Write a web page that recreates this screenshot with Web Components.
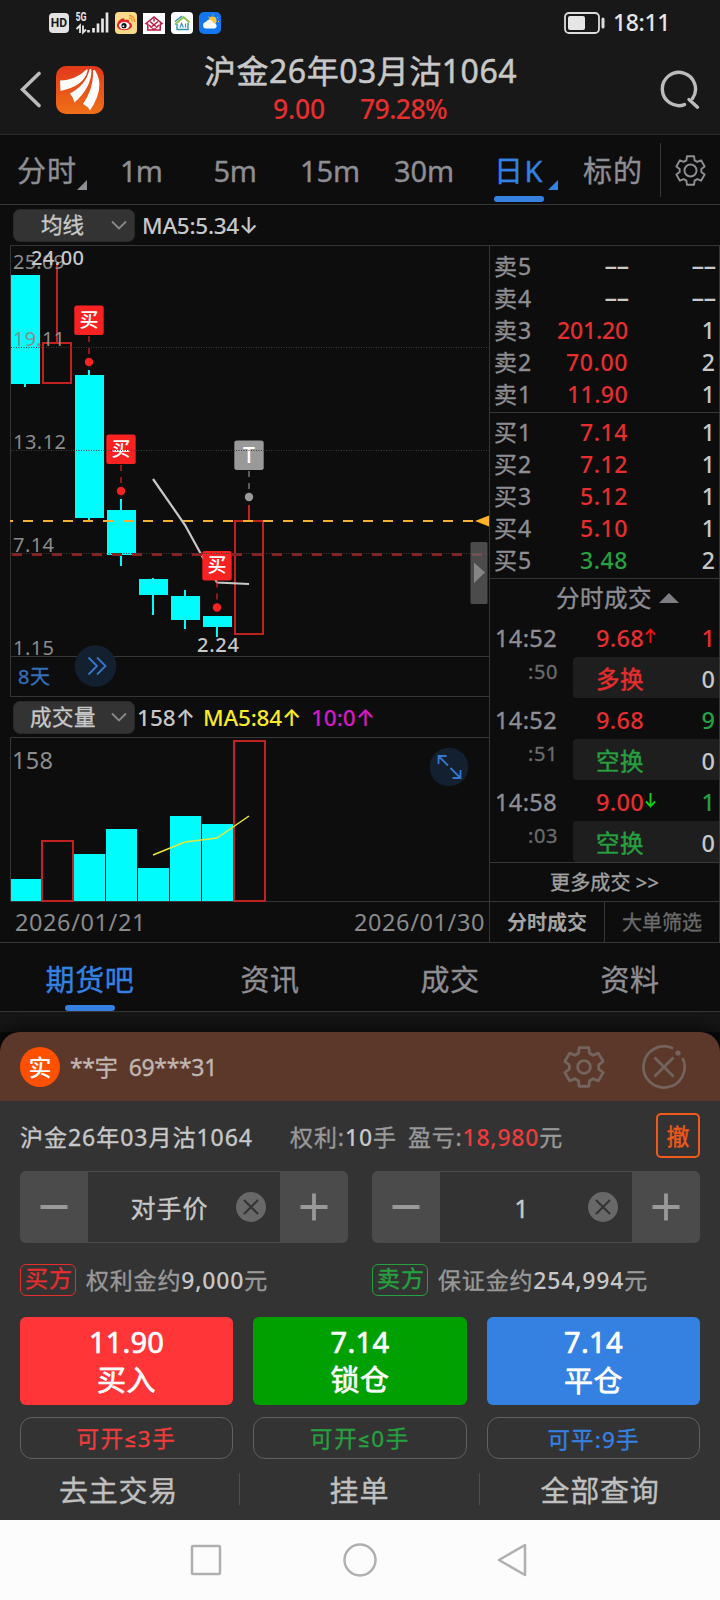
<!DOCTYPE html>
<html lang="zh-CN">
<head>
<meta charset="utf-8">
<title>沪金26年03月沽1064</title>
<style>
  body {
    margin: 0;
    background: #0d0d0d;
    color: #c8c8c8;
    font-family: "Noto Sans", "Noto Sans CJK SC", sans-serif;
    -webkit-text-stroke: 0.35px;
    --red: #e52e2e;
    --green: #27a040;
    --blue: #3581e2;
    --muted: #8e8e93;
    --line: #363636;
  }
</style>
</head>
<body>
<option-app></option-app>

<script>
/*
 * Define a custom element from a piece of markup. The markup may be a
 * function of the element, for those that read attributes.
 */
function define (name, markup) {
  customElements.define(name, class extends HTMLElement {
    constructor () {
      super()
      this.attachShadow({ mode: 'open' })
    }

    connectedCallback () {
      const template = document.createElement('template')
      template.innerHTML = typeof markup === 'function' ? markup(this) : markup
      this.shadowRoot.replaceChildren(template.content.cloneNode(true))
    }
  })
}

/*
 * Text that is tracked in or out to fill a given width.
 */
customElements.define('fit-text', class extends HTMLElement {
  constructor () {
    super()
    this.attachShadow({ mode: 'open' }).innerHTML = `
      <style>
        :host { display: block; flex: none; white-space: nowrap; line-height: 1.2; }
      </style>
      <span><slot></slot></span>`
  }

  connectedCallback () {
    const width = Number(this.getAttribute('w'))
    const natural = this.shadowRoot.querySelector('span').getBoundingClientRect().width
    const count = [...this.textContent].length
    if (width && count) {
      this.style.letterSpacing = `${(width - natural) / count}px`
    }
  }
})

define('status-bar', `
  <style>
    :host { display: flex; align-items: center; height: 45px; padding: 0 50px 0 49px; color: #e6e6e6; background: #181818; -webkit-text-stroke: 0; }
    .hd { width: 20px; height: 20px; margin-right: 7px; border-radius: 4px; background: #e2e2e2; color: #181818;
      font: 700 12px/20px Roboto, sans-serif; text-align: center; }
    .net { display: block; margin-right: 6px; }
    .apps { display: flex; gap: 6px; flex: 1; }
    svg { display: block; }
    .time { font-size: 23px; font-weight: 500; }
    .battery { margin-right: 7px; }
  </style>
  <div class="hd">HD</div>
  <svg class="net" width="33" height="24" viewBox="76 11 33 24">
    <text x="75.500" y="20.500" font-family="Roboto" font-size="12" font-weight="700" fill="#e6e6e6" textLength="11" lengthAdjust="spacingAndGlyphs">5G</text>
    <path d="M80 33V25.500L76.500 29M83 25.500V32.500L86 29.500" fill="none" stroke="#e6e6e6" stroke-width="1.800"/>
    <path d="M88.500 32.500v-2.500M93.500 32.500v-4.500M98 32.500v-9M102.500 32.500v-14M107 32.500v-20" stroke="#e6e6e6" stroke-width="2.700" stroke-linecap="butt"/>
  </svg>
  <div class="apps">
    <svg width="22" height="22" viewBox="0 0 22 22">
      <rect width="22" height="22" rx="4" fill="#fbd98a"/>
      <path d="M2 13.500C2 9.500 7 5 9 6.500c1 .7.500 2 .500 2S13 7 14 8.500c.5.800 0 1.700 0 1.700s3 .700 3 3.300c0 3-4 4.700-8 4.700S2 16.500 2 13.500z" fill="#e0232a"/>
      <ellipse cx="9.300" cy="13.600" rx="5.300" ry="3.600" fill="#fff"/>
      <circle cx="9" cy="13.700" r="2.600" fill="#111"/><circle cx="8.400" cy="14.200" r=".9" fill="#fff"/>
      <path d="M14 3.500a5.500 5.500 0 0 1 5.500 6.500M14.200 6a3 3 0 0 1 3 3.500" fill="none" stroke="#f29a1f" stroke-width="1.300"/>
    </svg>
    <svg width="22" height="22" viewBox="0 -1 22 22">
      <rect y="0" width="22" height="22" fill="#fff"/>
      <path d="M3 10.500L11 4l8 6.500-1.800.8V17H4.800v-5.700z" fill="none" stroke="#b8173f" stroke-width="1.500"/>
      <path d="M7 8.500l6 5M15 8.500l-6 5M11 5.500v3M6 12l3 3M16 12l-3 3M9 16h4" stroke="#b8173f" stroke-width="1.500"/>
    </svg>
    <svg width="22" height="22" viewBox="0 0 22 22">
      <rect width="22" height="22" rx="4" fill="#fff"/>
      <path d="M4 12.500L12.500 5l6 5.500" fill="none" stroke="#8bc34a" stroke-width="1.700"/>
      <path d="M4 9.500L11 4M6 12v5.500h11V11" fill="none" stroke="#2f95a8" stroke-width="1.400"/>
      <path d="M9 15.500l1.700-4 1.700 4M14.500 11.500v4" fill="none" stroke="#3a8fd0" stroke-width="1.200"/>
    </svg>
    <svg width="22" height="22" viewBox="0 0 22 22">
      <rect width="22" height="22" rx="5" fill="#1277f0"/>
      <circle cx="13.500" cy="8.500" r="4" fill="#fcc53a"/>
      <path d="M14 2.300v1M19 5l-.8.700M9 4.500l.7.600M20 9.500h-1" stroke="#fcc53a"/>
      <path d="M7 16.500a3.300 3.300 0 0 1-.3-6.500 4.300 4.300 0 0 1 7.800 1.200A2.700 2.700 0 0 1 15.500 16.500z" fill="#fff"/>
    </svg>
  </div>
  <svg class="battery" width="42" height="22" viewBox="0 0 42 22">
    <rect x="1" y="1" width="34" height="20" rx="4" fill="none" stroke="#dcdcdc" stroke-width="1.800"/>
    <rect x="4" y="4" width="17" height="14" rx="2" fill="#e6e6e6"/>
    <rect x="37.500" y="5.500" width="3" height="11" rx="1.500" fill="#dcdcdc"/>
  </svg>
  <fit-text class="time" w="57">18:11</fit-text>
`)

define('quote-header', `
  <style>
    :host { display: grid; grid-template-columns: 120px 1fr 120px; height: 89px; background: #181818; border-bottom: 1px solid #2a2a2a; }
    .left { display: flex; padding: 21px 0 0 20px; gap: 14px; }
    .mid { display: flex; flex-direction: column; align-items: center; padding-top: 7px; margin-left: 1px; }
    .title { font-size: 32px; -webkit-text-stroke: 0.5px; }
    .price { display: flex; gap: 35px; margin: 4px 1px 0 0; color: var(--red); font-size: 26.500px; font-weight: 500; -webkit-text-stroke: 0; }
    .search { margin: 24px 0 0 58px; }
    svg { display: block; flex: none; }
  </style>
  <div class="left">
    <svg width="22" height="48" viewBox="20 66 22 48">
      <path d="M39 73.500L22.500 89.500 39 105.500" fill="none" stroke="#bcbcbc" stroke-width="3.600" stroke-linecap="round"/>
    </svg>
    <svg width="48" height="48" viewBox="0 0 48 48">
      <defs><linearGradient id="g" x1="0" y1="0" x2="0" y2="1"><stop offset="0" stop-color="#e2381a"/><stop offset="1" stop-color="#f07018"/></linearGradient></defs>
      <rect width="48" height="48" rx="10" fill="url(#g)"/>
      <path d="M4 14.500Q20 14 30.500 3.500 32 2.500 31.500 5 28 20 4.500 25z" fill="#fff"/>
      <path d="M14 27.500Q30 19 33.500 3.500 35 1.500 35.500 5 35 22 18.500 36.500 17 31 14 27.500z" fill="#fff"/>
      <path d="M27 38Q38 22 37 5 38 2 40 6 49 22 34 44.500 31.500 40 27 38z" fill="#fff"/>
    </svg>
  </div>
  <div class="mid">
    <fit-text class="title" w="313">沪金26年03月沽1064</fit-text>
    <div class="price"><fit-text w="52">9.00</fit-text><fit-text w="87">79.28%</fit-text></div>
  </div>
  <svg class="search" width="44" height="44" viewBox="658 69 44 44">
    <path d="M684.500 104.600A16.600 16.600 0 1 1 692.500 98.500" fill="none" stroke="#bcbcbc" stroke-width="3.400" stroke-linecap="round"/>
    <path d="M689 99.500l8.500 7.700" stroke="#bcbcbc" stroke-width="3.400" stroke-linecap="round"/>
  </svg>
`)

/*
 * Six-toothed cog round the origin with the given hole.
 */
function gear (hole) {
  const points = []
  for (let tooth = 0; tooth < 6; tooth++) {
    for (const [turn, r] of [[-22, 11.6], [-14, 15.6], [14, 15.6], [22, 11.6]]) {
      const angle = (tooth * 60 - 90 + turn) * Math.PI / 180
      points.push(`${(r * Math.cos(angle)).toFixed(2)},${(r * Math.sin(angle)).toFixed(2)}`)
    }
  }
  return `<polygon points="${points.join(' ')}"/><circle r="${hole}"/>`
}

define('period-tabs', `
  <style>
    :host { display: grid; grid-template-columns: repeat(7, 94px) 62px; height: 69px; border-bottom: 1px solid var(--line); color: var(--muted); font-size: 29px; }
    div { display: flex; align-items: center; justify-content: center; position: relative; padding-top: 3px; }
    i { position: absolute; right: 7px; bottom: 14px; border: 5px solid; border-color: transparent currentColor currentColor transparent; }
    .on { color: var(--blue); padding-left: 4px; }
    .on i { right: 6px; }
    .on::after { content: ""; position: absolute; left: 24px; bottom: 2px; width: 50px; height: 6px; border-radius: 3px; background: var(--blue); }
    .m15, .m30 { padding-left: 2px; }
    .base { padding-left: 4px; }
    .gear { height: 54px; margin: 8px 0 0 2px; border-left: 1px solid var(--line); box-sizing: border-box; width: 59px; padding: 0; }
  </style>
  <div><fit-text w="60">分时</fit-text><i></i></div>
  <div><fit-text w="42">1m</fit-text></div>
  <div><fit-text w="43">5m</fit-text></div>
  <div class="m15"><fit-text w="60">15m</fit-text></div>
  <div class="m30"><fit-text w="60">30m</fit-text></div>
  <div class="on"><fit-text w="50">日K</fit-text><i></i></div>
  <div class="base"><fit-text w="60">标的</fit-text></div>
  <div class="gear"><svg width="33" height="33" viewBox="-17.500 -17.500 35 35" fill="none" stroke="#8e8e93" stroke-width="2" stroke-linejoin="round">${gear(6.4)}</svg></div>
`)

/*
 * Row above a chart: indicator drop-down, then the slotted values.
 */
define('indicator-bar', el => `
  <style>
    :host { display: flex; align-items: center; height: 40px; padding-left: 13px; font-size: 22.500px; font-weight: 500; -webkit-text-stroke: 0; }
    .drop { display: flex; align-items: center; justify-content: space-between; box-sizing: border-box; width: 122px; height: 33px; padding: 0 7px 0 ${el.getAttribute('pad')}px;
      border: 1px solid #2a2a2a; border-radius: 7px; background: #333; font-size: 21.500px; font-weight: 400; -webkit-text-stroke: 0.35px; }
    ::slotted(*) { margin-left: 7px; }
  </style>
  <div class="drop"><fit-text w="${el.getAttribute('w')}">${el.getAttribute('label')}</fit-text>
    <svg width="16" height="10" viewBox="0 0 16 10"><path d="M1 1.500l7 7 7-7" fill="none" stroke="#8a8a8a" stroke-width="1.800"/></svg>
  </div>
  <slot></slot>
`)

// x of the left edge, top and bottom of the body, top and bottom of the wick
const candles = [
  [11, 275, 384, 384, 387],
  [42, 342, 384, 264, 342, 'up'],
  [75, 375, 518, 370, 521],
  [107, 510, 555, 499, 566],
  [139, 579, 595, 578, 615],
  [171, 596, 620, 590, 629],
  [203, 616, 627, 627, 637],
  [234, 520, 635, 505, 520, 'up']
]

// centre x, top of the badge, letter, colour
const marks = [
  [89, 305.5, '买', '#f82222'],
  [121, 434.5, '买', '#f82222'],
  [217, 551, '买', '#f82222'],
  [249, 440.5, 'T', '#999']
]

define('k-chart', () => {
  const bodies = candles.map(([x, top, bottom, high, low, up]) => up
    ? `<path d="M${x + 15} ${high}V${low}" stroke="#c2221f" stroke-width="2"/>
       <rect x="${x + 1}" y="${top + 1}" width="28" height="${bottom - top - 2}" fill="none" stroke="#c2221f" stroke-width="2"/>`
    : `<path d="M${x + 14} ${high}V${low}" stroke="#00fcfc" stroke-width="2"/>
       <rect x="${x}" y="${top}" width="29" height="${bottom - top}" fill="#00fcfc"/>`
  ).join('')

  const badges = marks.map(([x, y, letter, color]) => `
    <path d="M${x} ${y + 30.5}v20" stroke="${color}" stroke-width="2" stroke-dasharray="6" opacity=".55"/>
    <circle cx="${x}" cy="${y + 56.5}" r="4.200" fill="${color}"/>
    <rect x="${x - 14.7}" y="${y}" width="29.400" height="29.400" rx="2.500" fill="${color}"/>
    <text x="${x}" y="${y + (letter === 'T' ? 22 : 21)}" text-anchor="middle" font-size="${letter === 'T' ? 21 : 19}" font-weight="500" fill="#fff">${letter}</text>`
  ).join('')

  return `
  <style>
    :host { display: block; -webkit-text-stroke: 0; }
    svg { display: block; }
    text { font-family: "Noto Sans", "Noto Sans CJK SC", sans-serif; }
    .axis { font-size: 20px; fill: #8c8c8c; }
    .peak { font-size: 20px; fill: #c8c8c8; font-weight: 500; }
  </style>
  <svg width="489" height="452" viewBox="0 245 489 452">
    <path d="M489 245.500H10.500V696.500H489M10 656.500H489" fill="none" stroke="#363636"/>
    ${bodies}
    <path d="M153 479L185 525 202 556 217 582.500 249 584" fill="none" stroke="#c8c8c8" stroke-width="2.200"/>
    <path d="M12 554.500H489" stroke="#8c2020" stroke-width="3" stroke-dasharray="10"/>
    <path d="M10 521H13M23 521H479" stroke="#f3b237" stroke-width="2" stroke-dasharray="10"/>
    <path d="M475 521L489 515.500V526.500z" fill="#ffb32c"/>
    ${badges}
    <path d="M11 347.500H489M11 450.500H489M11 553.500H489" stroke="#3c3c3c" stroke-dasharray="1 1.500"/>
    <g class="axis">
      <text x="13" y="268.500" textLength="52">25.09</text>
      <text x="13" y="345.500" textLength="52">19.11</text>
      <text x="13" y="448.500" textLength="53">13.12</text>
      <text x="13" y="552" textLength="41">7.14</text>
      <text x="13" y="654.500" textLength="41">1.15</text>
    </g>
    <text class="peak" x="31" y="264.500" textLength="53">24.00</text>
    <text class="peak" x="197" y="651.500" textLength="42">2.24</text>
    <text x="18" y="683.500" font-size="20" fill="#3470ba" stroke="#3470ba" stroke-width=".35" textLength="32">8天</text>
    <circle cx="95.500" cy="666" r="20.800" fill="#122030"/>
    <path d="M88.500 657.500l8.500 8.500-8.500 8.500M97 657.500l8.500 8.500-8.500 8.500" fill="none" stroke="#3578cf" stroke-width="1.800"/>
    <rect x="470.500" y="542" width="17" height="62" rx="1.500" fill="#666" opacity=".7"/>
    <path d="M474 562.500v20.500L485 572.500z" fill="#858585"/>
  </svg>`
})

// left edge, width and top of each volume bar
const volumes = [
  [11, 30, 879],
  [41, 33, 840, 'up'],
  [74, 31, 854],
  [106, 31, 829],
  [138, 31, 868],
  [170, 31, 816],
  [202, 31, 824],
  [233, 33, 740, 'up']
]

define('volume-chart', () => `
  <style>
    :host { display: block; }
    svg { display: block; }
    text { font-family: "Noto Sans", sans-serif; }
  </style>
  <svg width="489" height="165" viewBox="0 737 489 165">
    <path d="M489 737.500H10.500V901.500H489" fill="none" stroke="#363636"/>
    ${volumes.map(([x, w, y, up]) => up
      ? `<rect x="${x + 1}" y="${y + 1}" width="${w - 2}" height="${900 - y}" fill="none" stroke="#c2221f" stroke-width="2"/>`
      : `<rect x="${x}" y="${y}" width="${w}" height="${901 - y}" fill="#00fcfc"/>`).join('')}
    <path d="M153 855L185 842 217 838 249 816" fill="none" stroke="#e8e83c" stroke-width="1.500"/>
    <text x="12" y="768.500" font-size="23.500" fill="#8c8c8c" textLength="41">158</text>
    <circle cx="449" cy="767" r="19.300" fill="#122030"/>
    <path d="M438.500 764V756H446.500M438.500 756L448 765.500M460.500 770V778H452.500M460.500 778L450.500 768" fill="none" stroke="#3578cf" stroke-width="1.800"/>
  </svg>
`)

define('order-book', () => {
  const rows = list => list.map(([label, price, w, amount, color]) => `
    <div class="row">
      <fit-text class="label" w="38">${label}</fit-text>
      <fit-text class="price${price === '--' ? ' none' : ''}" w="${w}" style="color: ${color ?? 'var(--red)'}">${price}</fit-text>
      <fit-text class="amount${amount === '--' ? ' none' : ''}">${amount}</fit-text>
    </div>`).join('')

  return `
  <style>
    :host { display: block; font-size: 23px; }
    .side { padding: 5px 4px 1px 4px; border-bottom: 1px solid var(--line); height: 160px; }
    .row { display: grid; grid-template-columns: 49px 85px 1fr; align-items: center; height: 32px; }
    .label { color: var(--muted); }
    .price, .amount { text-align: right; font-weight: 500; -webkit-text-stroke: 0; }
    .none { letter-spacing: -0.9px; transform: translateY(-1.5px) scaleX(1.85); transform-origin: right; }
    .buy { padding-top: 4px; }
  </style>
  <div class="side">${rows([
    ['卖5', '--', '', '--', 'inherit'],
    ['卖4', '--', '', '--', 'inherit'],
    ['卖3', '201.20', 71, '1'],
    ['卖2', '70.00', 62, '2'],
    ['卖1', '11.90', 61, '1']
  ])}</div>
  <div class="side buy">${rows([
    ['买1', '7.14', 48, '1'],
    ['买2', '7.12', 48, '1'],
    ['买3', '5.12', 48, '1'],
    ['买4', '5.10', 48, '1'],
    ['买5', '3.48', 48, '2', 'var(--green)']
  ])}</div>`
})

/*
 * One trade: time, price and amount, then its kind on the shaded line.
 */
define('trade-row', el => {
  const [time, sec, price, arrow, amount, color, kind, kindColor] = el.getAttribute('data').split(',')
  return `
  <style>
    :host { display: grid; grid-template-columns: 83px 1fr; grid-template-rows: 41px 41px; font-size: 23.500px; }
    .time { width: 67px; padding-top: 8px; text-align: right; color: var(--muted); }
    .sec { width: 68px; padding-top: 3px; text-align: right; color: #6b6b6b; font-size: 20px; }
    .line { display: flex; align-items: center; padding: 4px 4px 0 23px; font-weight: 500; -webkit-text-stroke: 0; }
    .kind { border-radius: 4px 0 0 4px; background: #1e1e1e; }
    .end { margin-left: auto; }
    svg { margin: -6px 0 0 1px; }
    .cn { font-weight: 400; -webkit-text-stroke: 0.45px; }
  </style>
  <fit-text class="time" w="62">${time}</fit-text>
  <div class="line">
    <fit-text w="48" style="color: var(--red)">${price}</fit-text>
    ${arrow ? `<svg width="11" height="16" viewBox="0 0 11 16"><path d="${arrow === 'up' ? 'M5.500 15V2M1 6.500L5.500 1.700 10 6.500' : 'M5.500 1V14M1 9.500L5.500 14.300 10 9.500'}" fill="none" stroke="${arrow === 'up' ? '#f01010' : '#10d010'}" stroke-width="1.900"/></svg>` : ''}
    <fit-text class="end" style="color: var(--${color})">${amount}</fit-text>
  </div>
  <fit-text class="sec" w="30">${sec}</fit-text>
  <div class="line kind">
    <fit-text class="cn" w="48" style="color: var(--${kindColor})">${kind}</fit-text>
    <fit-text class="end">0</fit-text>
  </div>`
})

define('trade-list', `
  <style>
    :host { display: block; }
    .head { display: flex; align-items: center; justify-content: center; gap: 7px; height: 36px; padding: 1px 0 0 26px; color: var(--muted); font-size: 23.500px; }
    .more { display: flex; align-items: center; justify-content: center; height: 36px; padding-top: 2px; border: solid var(--line); border-width: 1px 0; font-size: 20px; color: #a0a0a0; }
    .tabs { display: grid; grid-template-columns: 115px 1fr; height: 40px; font-size: 20px; color: #6b6b6b; }
    .tabs div { display: flex; align-items: center; justify-content: center; padding-top: 2px; border-right: 1px solid var(--line); }
    .tabs div:last-child { border: 0; }
    .tabs .on { color: #a4a4a4; font-weight: 700; -webkit-text-stroke: 0; }
  </style>
  <div class="head"><fit-text w="96">分时成交</fit-text><svg width="20" height="10"><path d="M0 10L10 0 20 10z" fill="#7c7c82"/></svg></div>
  <trade-row data="14:52,:50,9.68,up,1,red,多换,red"></trade-row>
  <trade-row data="14:52,:51,9.68,,9,green,空换,green"></trade-row>
  <trade-row data="14:58,:03,9.00,down,1,green,空换,green"></trade-row>
  <div class="more"><fit-text w="109">更多成交 &gt;&gt;</fit-text></div>
  <div class="tabs"><div class="on"><fit-text w="80">分时成交</fit-text></div><div><fit-text w="80">大单筛选</fit-text></div></div>
`)

define('market-view', `
  <style>
    :host { display: block; }
    .split { display: grid; grid-template-columns: 489px 1fr; border-bottom: 1px solid var(--line); }
    .book { border: solid var(--line); border-width: 1px 1px 0 1px; }
    .a { font-family: Inter, sans-serif; font-weight: 500; }
    .yellow { color: #f8ec28; }
    .pink { color: #d818c8; }
    .dates { display: flex; align-items: center; justify-content: space-between; height: 39px; padding: 1px 4px 0 15px; font-size: 23.500px; color: #8a8a8a; -webkit-text-stroke: 0; }
  </style>
  <indicator-bar label="均线" w="43" pad="27"><fit-text w="116">MA5:5.34<span class="a">↓</span></fit-text></indicator-bar>
  <div class="split">
    <div>
      <k-chart></k-chart>
      <indicator-bar label="成交量" w="66" pad="16">
        <fit-text w="58" style="margin-left: 2px">158<span class="a">↑</span></fit-text>
        <fit-text class="yellow" w="98" style="margin-left: 8px">MA5:84<span class="a">↑</span></fit-text>
        <fit-text class="pink" w="64" style="margin-left: 10px">10:0<span class="a">↑</span></fit-text>
      </indicator-bar>
      <volume-chart></volume-chart>
      <div class="dates"><fit-text w="131">2026/01/21</fit-text><fit-text w="131">2026/01/30</fit-text></div>
    </div>
    <div class="book">
      <order-book></order-book>
      <trade-list></trade-list>
    </div>
  </div>
`)

define('section-tabs', `
  <style>
    :host { display: grid; grid-template-columns: repeat(4, 1fr); height: 68px; border-bottom: 1px solid var(--line); color: var(--muted); font-size: 29px; }
    div { display: flex; align-items: center; justify-content: center; position: relative; height: 74px; }
    .on { color: var(--blue); }
    .on::after { content: ""; position: absolute; left: 65px; top: 62px; width: 50px; height: 6px; border-radius: 3px; background: var(--blue); }
  </style>
  <div class="on"><fit-text w="89">期货吧</fit-text></div>
  <div><fit-text w="59">资讯</fit-text></div>
  <div><fit-text w="59">成交</fit-text></div>
  <div><fit-text w="59">资料</fit-text></div>
`)

define('account-bar', `
  <style>
    :host { display: flex; align-items: center; box-sizing: border-box; height: 69px; padding: 1px 34px 0 20px; border-radius: 20px 20px 0 0; background: #5c382a; color: #c0b6b2; font-size: 23px; box-shadow: 0 0 20px #000; }
    .real { width: 40px; height: 40px; margin-right: 10px; border-radius: 50%; background: #ff5000; color: #fff; font-weight: 500; font-size: 23px; line-height: 40px; text-align: center; -webkit-text-stroke: 0; }
    .id { padding-top: 2px; }
    .gear { margin: 0 35px 0 auto; }
    svg { fill: none; stroke: #74645e; }
  </style>
  <div class="real">实</div>
  <fit-text class="id" w="147">**宇&nbsp; 69***31</fit-text>
  <svg class="gear" width="46" height="46" viewBox="-18 -18 36 36" stroke-width="2.200" stroke-linejoin="round">${gear(5)}</svg>
  <svg width="44" height="44" viewBox="-22 -22 44 44" stroke-width="2.600">
    <path d="M18.600-9A20.600 20.600 0 1 1 9-18.600M-9.500-9.500L9.500 9.500M9.500-9.500L-9.500 9.500"/><circle cx="14" cy="-14" r="1.300"/>
  </svg>
`)

/*
 * Minus and plus buttons round a value that can be cleared.
 */
define('step-field', `
  <style>
    :host { display: grid; grid-template-columns: 68px 192px 68px; box-sizing: border-box; height: 72px; border-radius: 6px; background: #4b4b4b; font-size: 25px; }
    div { display: flex; align-items: center; justify-content: center; }
    .value { margin: 1px 0; background: #333; padding: 2px 14px 0 0; }
    .text { flex: 1; padding-left: 15px; }
    svg { display: block; }
    .value svg { margin-top: -2px; }
  </style>
  <div><svg width="28" height="28"><path d="M.5 14h27" stroke="#999" stroke-width="4"/></svg></div>
  <div class="value"><div class="text"><slot></slot></div>
    <svg width="30" height="30" viewBox="-15 -15 30 30"><circle r="15" fill="#686868"/><path d="M-7-7L7 7M7-7L-7 7" stroke="#333" stroke-width="2"/></svg>
  </div>
  <div><svg width="28" height="28"><path d="M.5 14h27M14 .5v27" stroke="#999" stroke-width="3.800"/></svg></div>
`)

define('trade-panel', `
  <style>
    :host { display: block; height: 419px; padding: 0 20px; background: #333; color: #999; }
    .info { display: flex; align-items: center; height: 70px; padding-top: 3px; box-sizing: border-box; font-size: 23px; }
    .name, b { color: #c8c8c8; }
    b { font-weight: 500; -webkit-text-stroke: 0; }
    b.gain { color: #ee3c3c; }
    .cancel { display: flex; align-items: center; justify-content: center; box-sizing: border-box; width: 44px; height: 45px; margin: -4px 0 0 auto; padding-top: 2px; border: 2px solid #f05a1a; border-radius: 5px; color: #f05a1a; font-size: 23px; line-height: 1; }
    .two { display: grid; grid-template-columns: 328px 328px; gap: 24px; color: #c8c8c8; }
    .cost { margin-top: 21px; color: #999; font-size: 23px; }
    .cost div { display: flex; align-items: center; gap: 10px; height: 32px; }
    .cost div > fit-text { padding-top: 2px; }
    .tag { display: flex; box-sizing: border-box; width: 56px; height: 32px; padding-left: 4px; border: 1px solid; border-radius: 6px; color: var(--red); line-height: 1.200; }
    .tag.sell { color: var(--green); }
    .three { display: grid; grid-template-columns: 213px 214px 213px; gap: 20px; margin-top: 21px; }
    .btn { display: flex; flex-direction: column; align-items: center; height: 88px; box-sizing: border-box; padding-top: 8px; border-radius: 6px; color: #fff; font-size: 29px; font-weight: 400; -webkit-text-stroke: 0.7px; }
    .btn fit-text { height: 38px; }
    .pills { margin-top: 12px; font-size: 22.500px; }
    .pill { display: flex; align-items: center; justify-content: center; box-sizing: border-box; height: 42px; padding-top: 2px; border: 1px solid #606060; border-radius: 12px; }
    .le { font-family: Roboto, sans-serif; }
    .menu { display: grid; grid-template-columns: 219px 240px 1fr; margin: 14px 0 0; height: 32px; color: #c0c0c0; font-size: 29px; }
    .menu div { display: flex; align-items: center; justify-content: center; padding-top: 4px; height: 28px; border-left: 1px solid #4e4e4e; }
    .menu div:first-child { border: 0; padding-right: 22px; }
    .menu .last { padding-left: 20px; }
  </style>
  <div class="info">
    <fit-text class="name" w="233">沪金26年03月沽1064</fit-text>
    <fit-text w="107" style="margin-left: 37px">权利:<b>10</b>手</fit-text>
    <fit-text w="155" style="margin-left: 11px">盈亏:<b class="gain">18,980</b>元</fit-text>
    <div class="cancel">撤</div>
  </div>
  <div class="two">
    <step-field><fit-text w="78">对手价</fit-text></step-field>
    <step-field><fit-text>1</fit-text></step-field>
  </div>
  <div class="two cost">
    <div><span class="tag"><fit-text w="48">买方</fit-text></span><fit-text w="182">权利金约<b>9,000</b>元</fit-text></div>
    <div><span class="tag sell"><fit-text w="48">卖方</fit-text></span><fit-text w="210">保证金约<b>254,994</b>元</fit-text></div>
  </div>
  <div class="three">
    <div class="btn" style="background: #ff3538"><fit-text w="75">11.90</fit-text><fit-text w="59">买入</fit-text></div>
    <div class="btn" style="background: #00a000"><fit-text w="59">7.14</fit-text><fit-text w="59">锁仓</fit-text></div>
    <div class="btn" style="background: #3581e2"><fit-text w="59">7.14</fit-text><fit-text w="59" style="margin-top: 1px">平仓</fit-text></div>
  </div>
  <div class="three pills">
    <div class="pill" style="color: #ee3c3c"><fit-text w="100">可开<span class="le">≤</span>3手</fit-text></div>
    <div class="pill" style="color: var(--green)"><fit-text w="100">可开<span class="le">≤</span>0手</fit-text></div>
    <div class="pill" style="color: var(--blue)"><fit-text w="92">可平:9手</fit-text></div>
  </div>
  <div class="menu">
    <div><fit-text w="119">去主交易</fit-text></div>
    <div><fit-text w="60">挂单</fit-text></div>
    <div class="last"><fit-text w="119">全部查询</fit-text></div>
  </div>
`)

define('system-nav', `
  <style>
    :host { display: block; height: 80px; background: #fcfcfc; }
    svg { display: block; margin: auto; }
  </style>
  <svg width="360" height="80" viewBox="180 1520 360 80" fill="none" stroke="#b0b0b0" stroke-width="2.500" stroke-linejoin="round">
    <rect x="192" y="1546" width="28" height="28" rx="1"/>
    <circle cx="360" cy="1560" r="15.500"/>
    <path d="M499 1560L525 1545V1575z"/>
  </svg>
`)

define('option-app', `
  <style>
    :host { display: block; width: 720px; height: 1600px; overflow: hidden; }
    .gap { height: 20px; background: #161616; }
    account-bar, trade-panel { position: relative; }
    .sheet { background: #0a0a0a; }
  </style>
  <status-bar></status-bar>
  <quote-header></quote-header>
  <period-tabs></period-tabs>
  <market-view></market-view>
  <section-tabs></section-tabs>
  <div class="gap"></div>
  <div class="sheet">
    <account-bar></account-bar>
    <trade-panel></trade-panel>
  </div>
  <system-nav></system-nav>
`)
</script>
</body>
</html>
